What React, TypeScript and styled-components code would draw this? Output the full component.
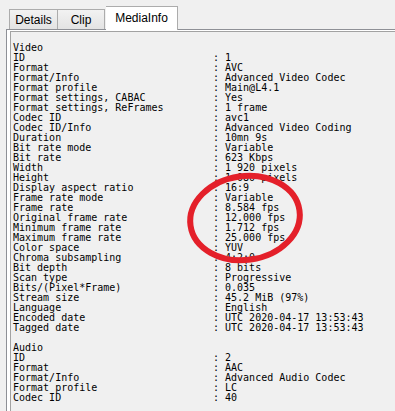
import React from 'react';
import styled, { createGlobalStyle } from 'styled-components';

type Row = { label?: string; value?: string };

const rows: Row[] = [
  {},
  { label: 'Video' },
  { label: 'ID', value: '1' },
  { label: 'Format', value: 'AVC' },
  { label: 'Format/Info', value: 'Advanced Video Codec' },
  { label: 'Format profile', value: 'Main@L4.1' },
  { label: 'Format settings, CABAC', value: 'Yes' },
  { label: 'Format settings, ReFrames', value: '1 frame' },
  { label: 'Codec ID', value: 'avc1' },
  { label: 'Codec ID/Info', value: 'Advanced Video Coding' },
  { label: 'Duration', value: '10mn 9s' },
  { label: 'Bit rate mode', value: 'Variable' },
  { label: 'Bit rate', value: '623 Kbps' },
  { label: 'Width', value: '1 920 pixels' },
  { label: 'Height', value: '1 080 pixels' },
  { label: 'Display aspect ratio', value: '16:9' },
  { label: 'Frame rate mode', value: 'Variable' },
  { label: 'Frame rate', value: '8.584 fps' },
  { label: 'Original frame rate', value: '12.000 fps' },
  { label: 'Minimum frame rate', value: '1.712 fps' },
  { label: 'Maximum frame rate', value: '25.000 fps' },
  { label: 'Color space', value: 'YUV' },
  { label: 'Chroma subsampling', value: '4:2:0' },
  { label: 'Bit depth', value: '8 bits' },
  { label: 'Scan type', value: 'Progressive' },
  { label: 'Bits/(Pixel*Frame)', value: '0.035' },
  { label: 'Stream size', value: '45.2 MiB (97%)' },
  { label: 'Language', value: 'English' },
  { label: 'Encoded date', value: 'UTC 2020-04-17 13:53:43' },
  { label: 'Tagged date', value: 'UTC 2020-04-17 13:53:43' },
  {},
  { label: 'Audio' },
  { label: 'ID', value: '2' },
  { label: 'Format', value: 'AAC' },
  { label: 'Format/Info', value: 'Advanced Audio Codec' },
  { label: 'Format profile', value: 'LC' },
  { label: 'Codec ID', value: '40' },
  {},
  {},
];

const App: React.FC = () => {
  return (
    <Window>
      <GlobalStyle />
      <TabStrip>
        <Tab $width={49}>Details</Tab>
        <Tab $width={47}>Clip</Tab>
        <Tab $width={72} $active>MediaInfo</Tab>
      </TabStrip>
      <Panel>
        <TextBox>
          {rows.map((r, i) => (
            <Line key={i}>
              <span>{r.label ?? ''}</span>
              <span>{r.value !== undefined ? ': ' + r.value : ''}</span>
            </Line>
          ))}
        </TextBox>
      </Panel>
      <Mark width="130" height="105" viewBox="0 0 130 105">
        <ellipse
          cx="65"
          cy="53"
          rx="55"
          ry="42"
          fill="none"
          stroke="#e4202a"
          strokeWidth="6"
          transform="rotate(-8 65 53)"
        />
      </Mark>
    </Window>
  );
};

export default App;

const GlobalStyle = createGlobalStyle`
  html, body {
    margin: 0;
    padding: 0;
    background: #f0f0f0;
  }
`;

const Window = styled.div`
  position: relative;
  width: 395px;
  height: 411px;
  overflow: hidden;
  background: #f0f0f0;
`;

const TabStrip = styled.div`
  position: relative;
  z-index: 2;
  display: flex;
  align-items: flex-start;
  height: 24px;
  margin-top: 6px;
  padding-left: 9px;
`;

const Tab = styled.div<{ $active?: boolean; $width: number }>`
  box-sizing: border-box;
  display: flex;
  align-items: center;
  justify-content: center;
  width: ${p => p.$width}px;
  font-family: 'Liberation Sans', Arial, sans-serif;
  font-size: 12px;
  color: #000;
  border: 1px solid #acacac;
  border-bottom: none;
  ${p =>
    p.$active
      ? `
    height: 24px;
    margin-left: 1px;
    padding-bottom: 2px;
    background: #ffffff;
  `
      : `
    height: 20px;
    margin-top: 3px;
    padding-top: 1px;
    background: linear-gradient(#f2f2f2, #e3e3e3);
    & + & { border-left: none; }
  `}
`;

const Panel = styled.div`
  position: relative;
  z-index: 1;
  margin-top: -1px;
  margin-left: 6px;
  padding: 1px 0 0 3px;
  border: 1px solid #8e9096;
  border-right: none;
  border-bottom: none;
  background: #ffffff;
`;

const TextBox = styled.div`
  border: 1px solid #a2a2a2;
  border-right: none;
  border-bottom: none;
  padding: 1px 0 0 2px;
  background: #f0f0f0;
  font-family: 'DejaVu Sans Mono', 'Liberation Mono', monospace;
  font-size: 10px;
  line-height: 10px;
  color: #000;
`;

const Line = styled.div`
  display: grid;
  grid-template-columns: 200px 1fr;
  height: 10px;
  white-space: pre;
`;

const Mark = styled.svg`
  position: absolute;
  left: 180px;
  top: 165px;
  z-index: 3;
`;
